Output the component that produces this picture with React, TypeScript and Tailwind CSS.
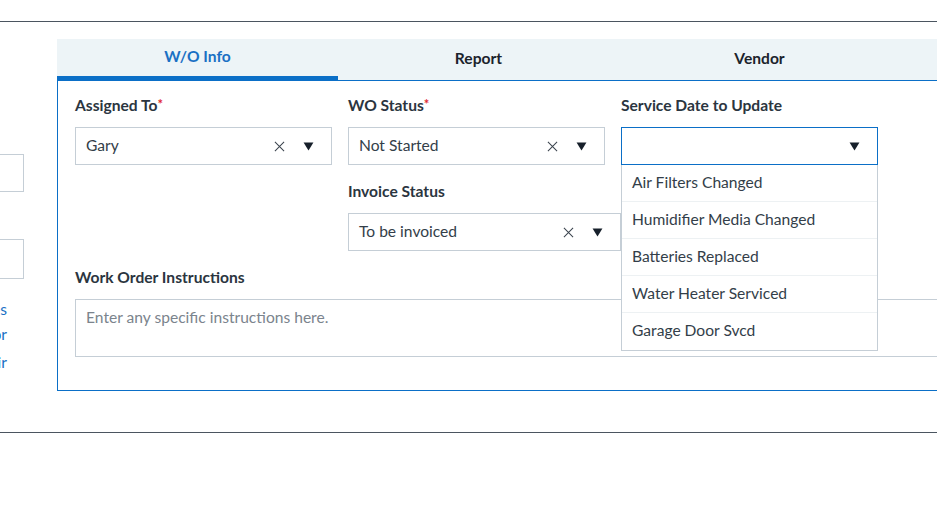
const FONT = "font-['Lato','Noto_Sans',sans-serif]";

function CaretDown({ className = '' }: { className?: string }) {
  return (
    <svg viewBox="0 0 12 10" className={`w-[11px] h-[9px] ${className}`} aria-hidden="true">
      <path d="M0.5 0.5 L11.5 0.5 L6 9.5 Z" fill="#17202b" />
    </svg>
  );
}

function ClearX() {
  return (
    <svg viewBox="0 0 12 12" className="w-[11px] h-[11px]" aria-hidden="true">
      <path d="M1 1 L11 11 M11 1 L1 11" stroke="#3a434d" strokeWidth="1.1" fill="none" />
    </svg>
  );
}

function Label({ text, required }: { text: string; required?: boolean }) {
  return (
    <div className="text-[15.6px] font-bold leading-[20px] text-[#2b3540] mb-[12px]">
      {text}
      {required && <span className="text-[#e0282f] text-[13px] align-top relative -top-[1px]">*</span>}
    </div>
  );
}

function Select({ value, width = 'w-[257px]', focused, clearable = true }: { value?: string; width?: string; focused?: boolean; clearable?: boolean }) {
  return (
    <div
      className={`${width} h-[38px] flex items-center pl-[10px] pr-[17px] bg-white border ${
        focused ? 'border-[#0b6fc7]' : 'border-[#c5ced6]'
      }`}
    >
      <span className="flex-1 text-[15.6px] text-[#333e49] whitespace-nowrap pb-[1px]">{value}</span>
      {clearable && value && (
        <span className="mr-[18px] flex items-center">
          <ClearX />
        </span>
      )}
      <CaretDown />
    </div>
  );
}

const serviceOptions = [
  'Air Filters Changed',
  'Humidifier Media Changed',
  'Batteries Replaced',
  'Water Heater Serviced',
  'Garage Door Svcd',
];

function Sidebar() {
  return (
    <div className="w-[200px] -ml-[176px] shrink-0 flex flex-col items-end">
      <div className="mt-[115px] w-[140px] h-[38px] border border-[#c5ced6]" />
      <div className="mt-[47px] w-[140px] h-[40px] border border-[#c5ced6]" />
      <div className="mt-[19px] pr-[17px] flex flex-col items-end text-[15.6px] text-[#1a70c4] whitespace-nowrap">
        <span className="leading-[22px]">Notes</span>
        <span className="leading-[22px] mt-[3px]">Vendor</span>
        <span className="leading-[22px] mt-[6px]">Repair</span>
      </div>
    </div>
  );
}

export default function App() {
  const tabs = ['W/O Info', 'Report', 'Vendor', 'History'];
  return (
    <div className={`w-[937px] h-[508px] overflow-hidden bg-white ${FONT}`}>
      <div className="h-[21px]" />
      <div className="border-t border-[#4b5560]" />

      <div className="flex pt-[17px]">
        <Sidebar />

        <main className="ml-[33px] w-[900px] shrink-0">
          {/* Tabs */}
          <div className="flex h-[41px] bg-[#edf4f7]">
            {tabs.map((t, i) => (
              <div
                key={t}
                className={`w-[281px] shrink-0 flex items-center justify-center text-[15.6px] font-bold ${
                  i === 0
                    ? 'text-[#1a70c4] border-b-4 border-[#0b6fc7] pb-[2px]'
                    : 'text-[#1b232c] pb-[1px]'
                }`}
              >
                {t}
              </div>
            ))}
          </div>

          {/* Panel */}
          <div className="border border-r-0 border-[#0b6fc7] pl-[17px] pt-[14px] pb-[33px]">
            <div className="flex gap-[16px]">
              <div>
                <Label text="Assigned To" required />
                <Select value="Gary" />
              </div>
              <div>
                <Label text="WO Status" required />
                <Select value="Not Started" />
              </div>
              <div className="relative">
                <Label text="Service Date to Update" />
                <Select focused clearable={false} />
                <ul className="absolute z-10 left-0 top-full w-[257px] bg-white border border-t-0 border-[#c5ced6]">
                  {serviceOptions.map((o, i) => (
                    <li
                      key={o}
                      className={`h-[37px] flex items-center pl-[10px] pb-[1px] text-[15.6px] text-[#333e49] whitespace-nowrap ${
                        i < serviceOptions.length - 1 ? 'border-b border-[#edf1f3]' : ''
                      }`}
                    >
                      {o}
                    </li>
                  ))}
                </ul>
              </div>
            </div>

            <div className="flex mt-[16px]">
              <div className="w-[273px] shrink-0" />
              <div>
                <Label text="Invoice Status" />
                <Select value="To be invoiced" width="w-[273px]" />
              </div>
            </div>

            <div className="mt-[16px]">
              <Label text="Work Order Instructions" />
              <div className="w-[900px] h-[58px] border border-[#c5ced6] pl-[10px] pt-[7px] text-[15.6px] leading-[20px] text-[#7b848d]">
                Enter any specific instructions here.
              </div>
            </div>
          </div>
        </main>
      </div>

      <div className="mt-[41px] border-t border-[#4b5560]" />
    </div>
  );
}
